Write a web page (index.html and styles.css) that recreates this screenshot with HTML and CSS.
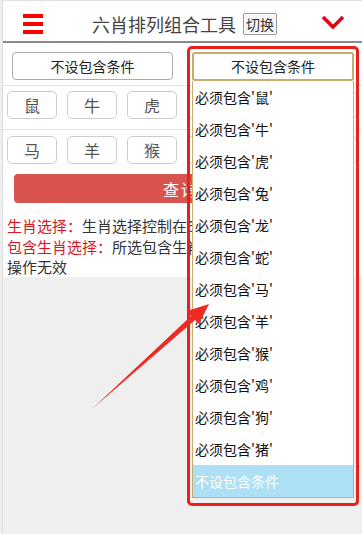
FILE: index.html
```html
<!DOCTYPE html>
<html lang="zh-CN">
<head>
    <meta charset="UTF-8">
    <meta name="viewport" content="width=device-width, initial-scale=1.0">
    <title>六肖排列组合工具</title>
    <link rel="stylesheet" href="styles.css">
</head>
<body>
    <div class="page">
        <div class="header">
            <div class="menu-btn">
                <span></span><span></span><span></span>
            </div>
            <div class="title">六肖排列组合工具</div>
            <button class="switch">切换</button>
            <svg class="chevron" width="24" height="16" viewBox="0 0 24 16">
                <polyline points="2,2 12,12 22,2" fill="none" stroke="#e60012" stroke-width="3.5"/>
            </svg>
        </div>

        <div class="content">
            <div class="select-row">
                <div class="select">不设包含条件</div>
                <div class="select">不设包含条件</div>
            </div>
            <div class="zodiac-row">
                <button class="zodiac">鼠</button>
                <button class="zodiac">牛</button>
                <button class="zodiac">虎</button>
                <button class="zodiac">兔</button>
                <button class="zodiac">龙</button>
                <button class="zodiac">蛇</button>
            </div>
            <div class="zodiac-row second">
                <button class="zodiac">马</button>
                <button class="zodiac">羊</button>
                <button class="zodiac">猴</button>
                <button class="zodiac">鸡</button>
                <button class="zodiac">狗</button>
                <button class="zodiac">猪</button>
            </div>
            <button class="query">查询</button>
            <div class="tips">
                <p><span class="label">生肖选择：</span>生肖选择控制在6-10个之间</p>
                <p><span class="label">包含生肖选择：</span>所选包含生肖需在生肖选择中，否则操作无效</p>
            </div>
        </div>
    </div>

    <!-- open dropdown of the second select -->
    <div class="dropdown">
        <div class="dropdown-face">不设包含条件</div>
        <ul class="dropdown-list">
            <li>必须包含'鼠'</li>
            <li>必须包含'牛'</li>
            <li>必须包含'虎'</li>
            <li>必须包含'兔'</li>
            <li>必须包含'龙'</li>
            <li>必须包含'蛇'</li>
            <li>必须包含'马'</li>
            <li>必须包含'羊'</li>
            <li>必须包含'猴'</li>
            <li>必须包含'鸡'</li>
            <li>必须包含'狗'</li>
            <li>必须包含'猪'</li>
            <li class="active">不设包含条件</li>
        </ul>
    </div>
    <div class="mark-frame"></div>
    <svg class="mark-arrow" width="362" height="534" viewBox="0 0 362 534">
        <polygon points="92,409 191,316 187,311 209,304 199,324 195,320" fill="#ee2a24"/>
    </svg>
</body>
</html>
```

FILE: styles.css
```css
body {
    margin: 0;
    background: #efefef;
    font-family: "Noto Sans CJK SC", "Liberation Sans", sans-serif;
    color: #333;
    position: relative;
    height: 534px;
    overflow: hidden;
}
.page {
    margin-left: 2px;
    border-left: 1px solid #dcdcdc;
    border-top: 1px solid #e2e2e2;
    height: 533px;
}
.header {
    height: 34px;
    padding-top: 6px;
    background: #fff;
    border-bottom: 2px solid #8a8a8a;
    display: flex;
    align-items: center;
}
.menu-btn {
    width: 20px;
    margin-left: 20px;
    display: flex;
    flex-direction: column;
    gap: 4px;
}
.menu-btn span {
    display: block;
    height: 4px;
    background: #f00;
}
.title {
    margin-left: 49px;
    font-size: 18px;
    color: #444;
}
.switch {
    margin-left: 7px;
    height: 22px;
    padding: 0 2px;
    border: 1px solid #9a9a9a;
    border-radius: 2px;
    background: #f6f6f6;
    font-family: inherit;
    font-size: 14px;
    line-height: 18px;
    color: #333;
}
.chevron {
    margin-left: auto;
    margin-right: 17px;
    margin-top: -2px;
}
.content {
    background: #fff;
    height: 234px;
}
.select-row {
    display: flex;
    gap: 19px;
    padding: 9px 5px 5px 9px;
    border-bottom: 1px solid #e3e3e3;
}
.select {
    width: 159px;
    height: 26px;
    border: 1px solid #aaa;
    border-radius: 4px;
    font-size: 14px;
    line-height: 26px;
    text-align: center;
    color: #222;
}
.zodiac-row {
    display: flex;
    gap: 10px;
    padding: 5px 0 10px 4px;
    border-bottom: 1px solid #e3e3e3;
}
.zodiac-row.second {
    padding-top: 6px;
    border-bottom: none;
}
.zodiac {
    width: 50px;
    height: 28px;
    border: 1px solid #ccc;
    border-radius: 5px;
    background: #fff;
    font-family: inherit;
    font-size: 16px;
    color: #555;
    padding: 0;
}
.query {
    display: block;
    margin: 0 0 0 11px;
    width: 334px;
    height: 29px;
    border: none;
    border-radius: 4px;
    background: #d9534f;
    color: #fff;
    font-family: inherit;
    font-size: 16px;
    letter-spacing: 2px;
}
.tips {
    margin-top: 13px;
    padding: 0 7px 0 4px;
    font-size: 15px;
    line-height: 20.5px;
    color: #333;
}
.tips p {
    margin: 0;
}
.label {
    color: #e0141e;
}
.dropdown {
    position: absolute;
    left: 192px;
    top: 52px;
    width: 162px;
}
.dropdown-face {
    height: 25px;
    border: 2px solid #c9ab6d;
    border-radius: 3px;
    background: #fff;
    font-size: 14px;
    line-height: 25px;
    text-align: center;
    color: #222;
}
.dropdown-list {
    list-style: none;
    margin: 0;
    padding: 0;
    background: #fff;
    border: 1px solid #c9ab6d;
    border-top: none;
}
.dropdown-list li {
    height: 32px;
    line-height: 32px;
    padding-left: 2px;
    font-size: 14px;
    color: #111;
}
.dropdown-list li.active {
    background: #ade0f4;
    color: #fff;
}
.mark-frame {
    position: absolute;
    left: 187px;
    top: 46px;
    width: 166px;
    height: 454px;
    border: 3px solid #e8221b;
    border-radius: 5px;
}
.mark-arrow {
    position: absolute;
    left: 0;
    top: 0;
}
```
